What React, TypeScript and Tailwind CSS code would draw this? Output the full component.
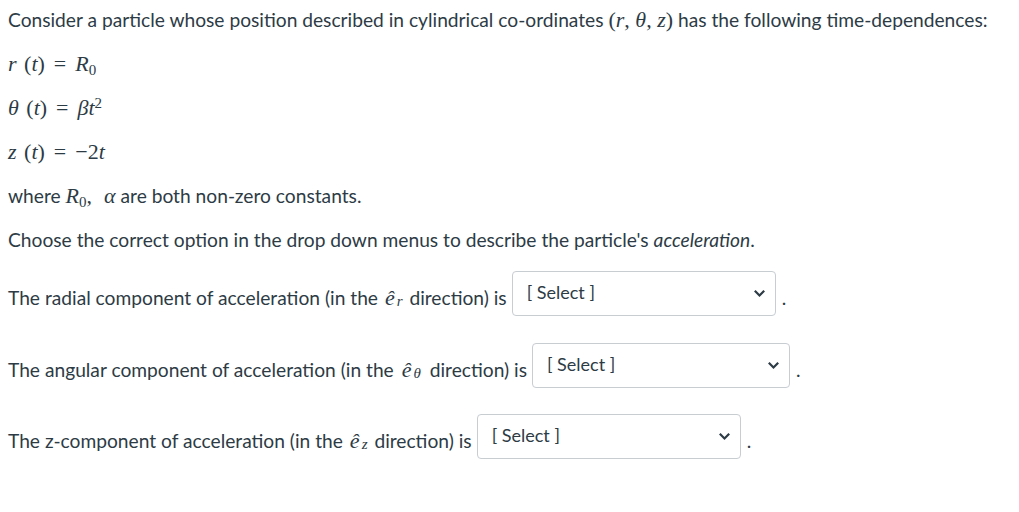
import { ReactNode } from "react";

const math = "font-['Liberation_Serif',serif] italic";

function M({ children, className = "" }: { children: ReactNode; className?: string }) {
  return <span className={`${math} text-[22px] ${className}`}>{children}</span>;
}

function Up({ children, className = "" }: { children: ReactNode; className?: string }) {
  return <span className={`not-italic ${className}`}>{children}</span>;
}

function Eq() {
  return <Up className="mx-[9px]">=</Up>;
}

function Hat({ sub, wide }: { sub: string; wide?: boolean }) {
  return (
    <M className={wide ? "mx-[3px]" : "ml-[2px] mr-[1px]"}>
      ê<sub className="text-[15px] relative top-[1px] ml-[2px] mr-[1px]">{sub}</sub>
    </M>
  );
}

function Dropdown({ width }: { width: string }) {
  return (
    <div className={`relative ${width} h-[45px] shrink-0`}>
      <select className="appearance-none w-full h-full border border-[#c7cdd1] rounded-[4px] bg-white pl-[14px] pb-[2px] text-[18px] text-[#2d3b45] outline-none">
        <option>[ Select ]</option>
      </select>
      <svg
        className="absolute right-[10px] top-[18px] pointer-events-none"
        width="13"
        height="9"
        viewBox="0 0 13 9"
      >
        <path d="M1.8 1.8 L6.5 6.5 L11.2 1.8" fill="none" stroke="#2d3b45" strokeWidth="2.2" />
      </svg>
    </div>
  );
}

function Row({
  label,
  sub,
  width,
  wide,
}: {
  label: string;
  sub: string;
  width: string;
  wide?: boolean;
}) {
  return (
    <div className="flex items-start">
      <div className="mt-[15px] leading-6 whitespace-nowrap">
        {label} <Hat sub={sub} wide={wide} /> direction) is
      </div>
      <div className="ml-[5px]">
        <Dropdown width={width} />
      </div>
      <div className="mt-[15px] leading-6 ml-[6px]">.</div>
    </div>
  );
}

export default function App() {
  return (
    <div className="bg-white min-h-[512px] px-2 pt-2 font-['Lato',sans-serif] text-[19.2px] text-[#2d3b45]">
      <div className="flex flex-col gap-5">
        <p className="leading-6 whitespace-nowrap">
          Consider a particle whose position described in cylindrical co-ordinates{" "}
          <M>
            <Up>(</Up>r<Up>,</Up> θ<Up>,</Up> z<Up>)</Up>
          </M>{" "}
          has the following time-dependences:
        </p>
        <p className="leading-6">
          <M>
            r <Up className="ml-[2px]">(</Up>t<Up>)</Up>
            <Eq />R<sub className="not-italic text-[15px]">0</sub>
          </M>
        </p>
        <p className="leading-6">
          <M>
            θ <Up className="ml-[2px]">(</Up>t<Up>)</Up>
            <Eq />βt<sup className="not-italic text-[15px]">2</sup>
          </M>
        </p>
        <p className="leading-6">
          <M>
            z <Up className="ml-[2px]">(</Up>t<Up>)</Up>
            <Eq />
            <Up>−2</Up>t
          </M>
        </p>
        <p className="leading-6">
          where{" "}
          <M>
            R<sub className="not-italic text-[15px]">0</sub>
            <Up>,</Up>
            <span className="ml-[12px]">α</span>
          </M>{" "}
          are both non-zero constants.
        </p>
        <p className="leading-6">
          Choose the correct option in the drop down menus to describe the particle's{" "}
          <em>acceleration</em>.
        </p>
      </div>
      <div className="flex flex-col gap-[26.5px] mt-[19px]">
        <Row label="The radial component of acceleration (in the" sub="r" width="w-[264px]" />
        <Row label="The angular component of acceleration (in the" sub="θ" width="w-[258px]" wide />
        <Row label="The z-component of acceleration (in the" sub="z" width="w-[264px]" />
      </div>
    </div>
  );
}
